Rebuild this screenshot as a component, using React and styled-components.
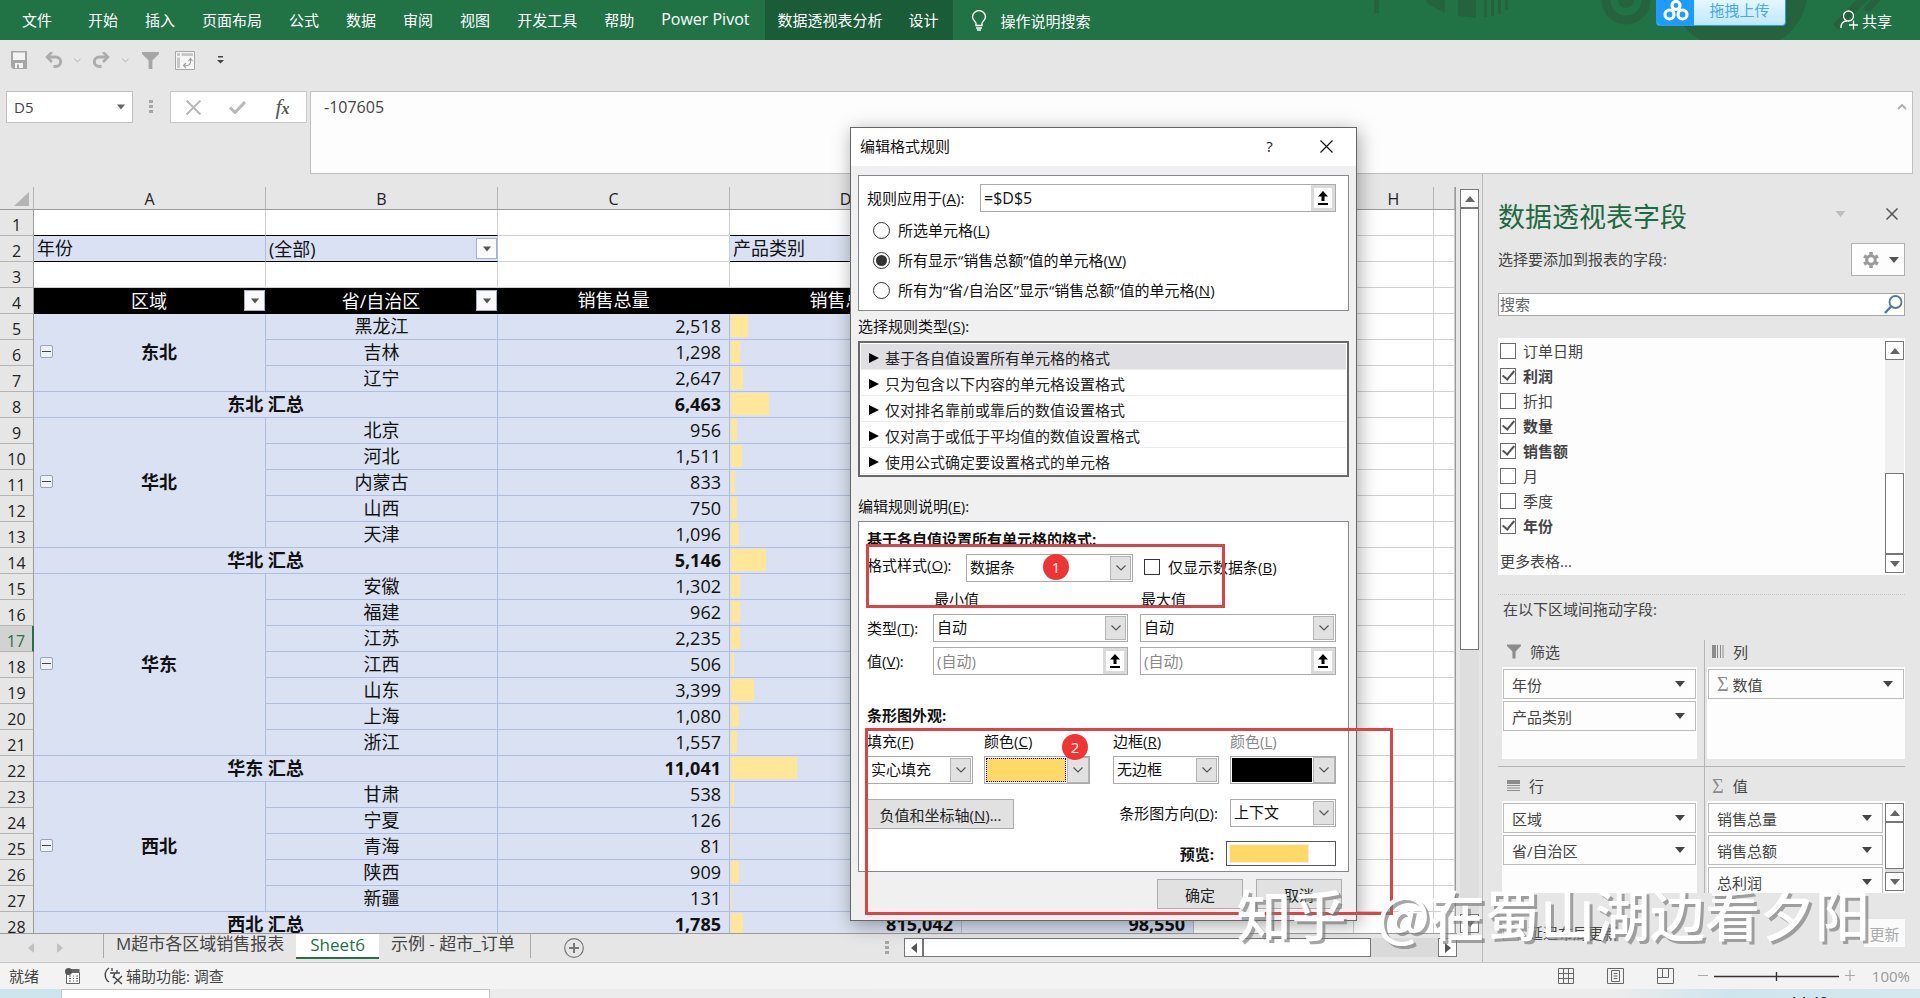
import React, { useState } from 'react'
import styled, { createGlobalStyle, css } from 'styled-components'

const tabs = ['开始', '插入', '页面布局', '公式', '数据', '审阅', '视图', '开发工具', '帮助']

// [区域, 行数据], 每行: [省份, 数量, 数据条宽度]
const regions = [
  {
    name: '东北',
    rows: [['黑龙江', '2,518', 17], ['吉林', '1,298', 9], ['辽宁', '2,647', 12]],
    total: ['6,463', 38]
  },
  {
    name: '华北',
    rows: [['北京', '956', 6], ['河北', '1,511', 11], ['内蒙古', '833', 4], ['山西', '750', 6], ['天津', '1,096', 8]],
    total: ['5,146', 35]
  },
  {
    name: '华东',
    rows: [
      ['安徽', '1,302', 9],
      ['福建', '962', 9],
      ['江苏', '2,235', 9],
      ['江西', '506', 3],
      ['山东', '3,399', 23],
      ['上海', '1,080', 8],
      ['浙江', '1,557', 6]
    ],
    total: ['11,041', 66]
  },
  {
    name: '西北',
    rows: [['甘肃', '538', 3], ['宁夏', '126', 1], ['青海', '81', 1], ['陕西', '909', 8], ['新疆', '131', 1]],
    total: ['1,785', 12, '815,042', '98,550']
  }
]

const ruleTypes = [
  '基于各自值设置所有单元格的格式',
  '只为包含以下内容的单元格设置格式',
  '仅对排名靠前或靠后的数值设置格式',
  '仅对高于或低于平均值的数值设置格式',
  '使用公式确定要设置格式的单元格'
]

const fields = [
  ['订单日期', false],
  ['利润', true],
  ['折扣', false],
  ['数量', true],
  ['销售额', true],
  ['月', false],
  ['季度', false],
  ['年份', true]
]

const Key = ({ text, k, end = '' }) => (
  <>
    {text}(<u>{k}</u>){end}
  </>
)

const Caret = ({ up, size = 10, color = '#444' }) => (
  <svg width={size} height='6' viewBox='0 0 10 6' aria-hidden='true'>
    <path d={up ? 'M0 6L5 0L10 6Z' : 'M0 0H10L5 6Z'} fill={color} />
  </svg>
)

const Chevron = ({ color = '#555', size = 10 }) => (
  <svg width={size} height={size} viewBox='0 0 10 10' fill='none' aria-hidden='true'>
    <path d='M0.5 2.5L5 7L9.5 2.5' stroke={color} strokeWidth='1.2' />
  </svg>
)

const Cross = ({ size = 13, color = '#111', width = 1.2 }) => (
  <svg width={size} height={size} viewBox='0 0 13 13' aria-hidden='true'>
    <path d='M0.5 0.5L12.5 12.5M12.5 0.5L0.5 12.5' stroke={color} strokeWidth={width} />
  </svg>
)

const RefArrow = () => (
  <svg width='12' height='14' viewBox='0 0 12 14' aria-hidden='true'>
    <path d='M6 0L11 5.5H7.5V10H4.5V5.5H1ZM1 12H11V14H1Z' fill='#000' />
  </svg>
)

const Funnel = ({ width = 14, height = 15, color = '#8c8c8c' }) => (
  <svg width={width} height={height} viewBox='0 0 18 18' aria-hidden='true'>
    <path d='M0 0H18V2L11 9V18H7V9L0 2Z' fill={color} />
  </svg>
)

const UndoIcon = ({ flip }) => (
  <svg width='18' height='16' viewBox='0 0 18 16' fill='none' aria-hidden='true'>
    <g transform={flip ? 'translate(18 0) scale(-1 1)' : undefined}>
      <path d='M2 5H10.500A5 4.600 0 0 1 10.500 14.500H8.500' stroke='#acacac' strokeWidth='3' />
      <path d='M7 0L2 5L7 10' stroke='#acacac' strokeWidth='2.600' />
    </g>
  </svg>
)

const Combo = ({ id, value, width, height = 28, label }) => (
  <SelectBox $width={width} $height={height}>
    <select id={id} defaultValue={value} aria-label={label}>
      <option>{value}</option>
    </select>
    <SelectArrow>
      <Chevron />
    </SelectArrow>
  </SelectBox>
)

const RefInput = ({ id, value, placeholder, label }) => (
  <RefBox>
    <input id={id} defaultValue={value} placeholder={placeholder} aria-label={label} />
    <RefButton aria-label='折叠对话框'>
      <RefArrow />
    </RefButton>
  </RefBox>
)

const Ribbon = () => (
  <RibbonBar>
    <Pattern viewBox='0 0 560 40' aria-hidden='true'>
      <g fill='#25633f'>
        <path d='M14 0H19V13H14ZM66 0H85V13L68 4ZM98 0H116V18L98 16ZM124 0H127V17H124ZM131 0H134V16H131ZM138 0H141V14H138ZM145 0H148V10H145Z' />
        <path d='M310 -10A62 60 0 0 0 340 40H420A62 60 0 0 0 448 -10Z' />
        <path d='M473 24L500 -4H512L478 30ZM503 9L514 -4H524L509 13Z' />
      </g>
      <circle cx='266' cy='0' r='20' fill='none' stroke='#25633f' strokeWidth='9' />
      <circle cx='266' cy='0' r='8' fill='#25633f' />
    </Pattern>
    <Tab $first>文件</Tab>
    {tabs.map(tab => (
      <Tab key={tab}>{tab}</Tab>
    ))}
    <Tab $latin>Power Pivot</Tab>
    <ContextTabs>
      <Tab $tight>数据透视表分析</Tab>
      <Tab $tight>设计</Tab>
    </ContextTabs>
    <TellMe>
      <svg width='16' height='21' viewBox='0 0 16 21' fill='none' stroke='#fff' strokeWidth='1.4' aria-hidden='true'>
        <path d='M5 15.500V13.500C5 11.500 1.500 10 1.500 6.800A6.300 6 0 0 1 14.500 6.800C14.500 10 11 11.500 11 13.500V15.500ZM5 18H11M6 20H10' />
      </svg>
      操作说明搜索
    </TellMe>
    <Share>
      <svg width='18' height='20' viewBox='0 0 18 20' fill='none' stroke='#fff' strokeWidth='1.3' aria-hidden='true'>
        <circle cx='8.500' cy='6' r='5' />
        <path d='M1 18C1 13.500 3.500 11 7 11M13.500 10.500V19.500M9 15H18' />
      </svg>
      共享
    </Share>
    <Upload>
      <UploadLogo>
        <svg width='28' height='22' viewBox='0 0 28 22' fill='none' stroke='#fff' strokeWidth='3.200' aria-hidden='true'>
          <circle cx='14' cy='5.500' r='4' />
          <circle cx='7.500' cy='14.500' r='4.500' />
          <circle cx='20.500' cy='14.500' r='4.500' />
        </svg>
      </UploadLogo>
      <span>拖拽上传</span>
    </Upload>
  </RibbonBar>
)

const QuickAccess = () => (
  <QuickBar>
    <IconButton aria-label='保存' $width={34}>
      <svg width='16' height='18' viewBox='0 0 16 18' aria-hidden='true'>
        <path d='M0 0H16V18H2L0 16Z' fill='#a6a6a6' />
        <path d='M2 1.500H14V9H2ZM4 12H12V17H4Z' fill='#f3f3f3' />
        <path d='M6 13.500H8V17H6Z' fill='#a6a6a6' />
      </svg>
    </IconButton>
    <IconButton aria-label='撤消' $width={36}>
      <UndoIcon />
    </IconButton>
    <IconButton aria-label='撤消列表' $width={10}>
      <Chevron size={7} color='#a6a6a6' />
    </IconButton>
    <IconButton aria-label='恢复' $width={38}>
      <UndoIcon flip />
    </IconButton>
    <IconButton aria-label='恢复列表' $width={10}>
      <Chevron size={7} color='#a6a6a6' />
    </IconButton>
    <IconButton aria-label='筛选' $width={40}>
      <Funnel width={19} height={17} color='#a6a6a6' />
    </IconButton>
    <IconButton aria-label='数据透视表' $width={30}>
      <svg width='20' height='19' viewBox='0 0 20 19' aria-hidden='true'>
        <path d='M0.500 0.500H19.500V18.500H0.500Z' fill='#f6f6f6' stroke='#a6a6a6' />
        <path d='M2 2H5V5H2ZM6.500 2H18V5H6.500ZM2 6.500H5V17H2Z' fill='#c8c8c8' />
        <path d='M9 14.500H12Q15.500 14.500 15.500 10V8M13.500 10L15.500 7.500L17.500 10M11 12L8.500 14.500L11 17' fill='none' stroke='#a0a0a0' strokeWidth='1.200' />
      </svg>
    </IconButton>
    <IconButton aria-label='自定义快速访问工具栏' $width={40}>
      <svg width='7' height='8' viewBox='0 0 7 8' aria-hidden='true'>
        <path d='M1 0H6V1.500H1ZM0 4H7L3.500 7.500Z' fill='#444' />
      </svg>
    </IconButton>
  </QuickBar>
)

const FormulaBar = () => (
  <FormulaRow>
    <NameBox>
      <input defaultValue='D5' aria-label='名称框' />
      <Caret size={8} color='#666' />
    </NameBox>
    <Grip />
    <FxBox>
      <IconButton aria-label='取消' $width={44}>
        <Cross size={15} color='#b8b8b8' width={1.8} />
      </IconButton>
      <IconButton aria-label='输入' $width={44}>
        <svg width='17' height='13' viewBox='0 0 17 13' fill='none' aria-hidden='true'>
          <path d='M1 6.500L6 11.500L16 1' stroke='#b8b8b8' strokeWidth='3' />
        </svg>
      </IconButton>
      <IconButton aria-label='插入函数' $width={47}>
        <Fx>
          f<small>x</small>
        </Fx>
      </IconButton>
    </FxBox>
    <FormulaText>
      <textarea defaultValue='-107605' aria-label='编辑栏' />
      <svg width='10' height='6' viewBox='0 0 10 6' fill='none' aria-hidden='true'>
        <path d='M1 5L5 1L9 5' stroke='#b0b0b0' strokeWidth='2' />
      </svg>
    </FormulaText>
  </FormulaRow>
)

const FilterButton = ({ label }) => (
  <Filter aria-label={label}>
    <Caret size={8} color='#555' />
  </Filter>
)

const BlankCells = () => (
  <>
    <Cell />
    <Cell />
    <Cell />
    <Cell />
  </>
)

const Sheet = () => {
  let n = 4
  return (
    <SheetTable>
      <colgroup>
        <Col $width={34} />
        {['A', 'B', 'C', 'D', 'E'].map(c => (
          <Col key={c} $width={232} />
        ))}
        {['F', 'G', 'H'].map(c => (
          <Col key={c} $width={80} />
        ))}
        <col />
      </colgroup>
      <thead>
        <tr>
          <Corner>
            <svg width='15' height='14' viewBox='0 0 15 14' aria-hidden='true'>
              <path d='M15 0V14H0Z' fill='#b4b4b4' />
            </svg>
          </Corner>
          {['A', 'B', 'C', 'D', 'E', 'F', 'G', 'H', ''].map(c => (
            <ColHead key={c}>{c}</ColHead>
          ))}
        </tr>
      </thead>
      <tbody>
        <tr>
          <RowHead>1</RowHead>
          <Cell $edge />
          <Cell $edge />
          <Cell />
          <Cell $edge />
          <Cell $edge />
          <BlankCells />
        </tr>
        <tr>
          <RowHead>2</RowHead>
          <Cell $pivot $edge $align='left'>年份</Cell>
          <Cell $pivot $edge $align='left' $filter>
            <WithFilter>
              (全部)
              <FilterButton label='筛选年份' />
            </WithFilter>
          </Cell>
          <Cell />
          <Cell $pivot $edge $align='left'>产品类别</Cell>
          <Cell $pivot $edge />
          <BlankCells />
        </tr>
        <tr>
          <RowHead>3</RowHead>
          <Cell />
          <Cell />
          <Cell />
          <Cell />
          <Cell />
          <BlankCells />
        </tr>
        <tr>
          <RowHead>4</RowHead>
          <Cell $head $filter>
            <WithFilter>
              <span>区域</span>
              <FilterButton label='筛选区域' />
            </WithFilter>
          </Cell>
          <Cell $head $filter>
            <WithFilter>
              <span>省/自治区</span>
              <FilterButton label='筛选省/自治区' />
            </WithFilter>
          </Cell>
          <Cell $head>销售总量</Cell>
          <Cell $head>销售总额</Cell>
          <Cell $head />
          <BlankCells />
        </tr>
        {regions.map(({ name, rows, total }) => (
          <React.Fragment key={name}>
            {rows.map(([province, amount, bar], i) => {
              n += 1
              return (
                <tr key={province}>
                  <RowHead $active={n === 17}>{n}</RowHead>
                  {i === 0 && (
                    <Cell $pivot rowSpan={rows.length}>
                      <Region>
                        <Collapse aria-label={`折叠${name}`} />
                        <strong>{name}</strong>
                      </Region>
                    </Cell>
                  )}
                  <Cell $pivot>{province}</Cell>
                  <Cell $pivot $align='right'>{amount}</Cell>
                  <Cell $pivot>
                    <DataBar style={{ width: bar }} />
                  </Cell>
                  <Cell $pivot />
                  <BlankCells />
                </tr>
              )
            })}
            <tr>
              <RowHead>{(n += 1)}</RowHead>
              <Cell $pivot $bold colSpan={2}>{name} 汇总</Cell>
              <Cell $pivot $bold $align='right'>{total[0]}</Cell>
              <Cell $pivot $bold $align='right'>
                <BarCell>
                  <DataBar style={{ width: total[1] }} />
                  {total[2]}
                </BarCell>
              </Cell>
              <Cell $pivot $bold $align='right'>{total[3]}</Cell>
              <BlankCells />
            </tr>
          </React.Fragment>
        ))}
      </tbody>
    </SheetTable>
  )
}

const SheetTabs = () => (
  <TabStrip>
    <TabNav>
      <svg width='6' height='10' viewBox='0 0 6 10' aria-hidden='true'>
        <path d='M6 0V10L0 5Z' fill='#c0c0c0' />
      </svg>
      <svg width='6' height='10' viewBox='0 0 6 10' aria-hidden='true'>
        <path d='M0 0V10L6 5Z' fill='#c0c0c0' />
      </svg>
    </TabNav>
    <SheetTab $left>M超市各区域销售报表</SheetTab>
    <SheetTab $active>Sheet6</SheetTab>
    <SheetTab $right>示例 - 超市_订单</SheetTab>
    <AddSheet aria-label='新工作表'>
      <svg width='20' height='20' viewBox='0 0 20 20' fill='none' stroke='#777' aria-hidden='true'>
        <circle cx='10' cy='10' r='9.300' strokeWidth='1.200' />
        <path d='M10 5V15M5 10H15' strokeWidth='2' />
      </svg>
    </AddSheet>
    <HScroll>
      <Grip />
      <ScrollButton aria-label='向左滚动'>
        <svg width='6' height='10' viewBox='0 0 6 10' aria-hidden='true'>
          <path d='M6 0V10L0 5Z' fill='#555' />
        </svg>
      </ScrollButton>
      <HTrack>
        <HThumb />
      </HTrack>
      <ScrollButton aria-label='向右滚动'>
        <svg width='6' height='10' viewBox='0 0 6 10' aria-hidden='true'>
          <path d='M0 0V10L6 5Z' fill='#555' />
        </svg>
      </ScrollButton>
    </HScroll>
  </TabStrip>
)

const Scrollbar = ({ before = 0, thumb, after = 0 }) => (
  <VScroll>
    <ScrollButton aria-label='向上滚动'>
      <Caret up color='#666' />
    </ScrollButton>
    <Spacer $grow={before} />
    <VThumb $grow={thumb} />
    <Spacer $grow={after} />
    <ScrollButton aria-label='向下滚动'>
      <Caret color='#666' />
    </ScrollButton>
  </VScroll>
)

const ZoneItem = ({ children }) => (
  <Item>
    <span>{children}</span>
    <Caret size={10} />
  </Item>
)

const FieldPane = () => (
  <Pane>
    <PaneHead>
      <h2>数据透视表字段</h2>
      <IconButton aria-label='任务窗格选项' $width={20}>
        <Caret size={11} color='#bdbdbd' />
      </IconButton>
      <IconButton aria-label='关闭窗格' $width={20}>
        <Cross size={12} color='#555' width={1.6} />
      </IconButton>
    </PaneHead>
    <PaneSub>
      <span>选择要添加到报表的字段:</span>
      <Gear aria-label='工具'>
        <svg width='16' height='16' viewBox='0 0 18 18' fill='none' aria-hidden='true'>
          <circle cx='9' cy='9' r='4.800' stroke='#999' strokeWidth='3.400' />
          <path d='M9 0V3M9 15V18M1.200 4.500L3.800 6M14.200 12L16.800 13.500M1.200 13.500L3.800 12M14.200 6L16.800 4.500' stroke='#999' strokeWidth='4' />
        </svg>
        <Caret size={10} color='#555' />
      </Gear>
    </PaneSub>
    <Search>
      <input placeholder='搜索' aria-label='搜索' />
      <svg width='19' height='19' viewBox='0 0 19 19' fill='none' stroke='#4f77a8' strokeWidth='1.800' aria-hidden='true'>
        <circle cx='11.500' cy='7' r='6' />
        <path d='M7 11.500L1 18' strokeWidth='2.400' />
      </svg>
    </Search>
    <FieldBox>
      <FieldList>
        {fields.map(([name, on]) => (
          <FieldRow key={name} $bold={on}>
            <Check type='checkbox' defaultChecked={on} />
            {name}
          </FieldRow>
        ))}
        <MoreTables href='#tables'>更多表格...</MoreTables>
      </FieldList>
      <Scrollbar before={114} thumb={80} />
    </FieldBox>
    <ZoneTitle>在以下区域间拖动字段:</ZoneTitle>
    <Zones>
      <Zone>
        <h3>
          <Funnel />
          筛选
        </h3>
        <Drop>
          <Items>
            <ZoneItem>年份</ZoneItem>
            <ZoneItem>产品类别</ZoneItem>
          </Items>
        </Drop>
      </Zone>
      <Zone $right>
        <h3>
          <svg width='12' height='13' viewBox='0 0 12 13' aria-hidden='true'>
            <path d='M0 0H4V13H0ZM5 0H6V13H5ZM8 0H9V13H8ZM10.500 0H11.500V13H10.500Z' fill='#8c8c8c' />
          </svg>
          列
        </h3>
        <Drop>
          <Items>
            <ZoneItem>
              <Sigma>Σ</Sigma> 数值
            </ZoneItem>
          </Items>
        </Drop>
      </Zone>
      <Zone $lower>
        <h3>
          <svg width='13' height='11' viewBox='0 0 13 11' aria-hidden='true'>
            <path d='M0 0H13V4H0ZM0 5H13V6H0ZM0 7.500H13V8.500H0ZM0 10H13V11H0Z' fill='#8c8c8c' />
          </svg>
          行
        </h3>
        <Drop>
          <Items>
            <ZoneItem>区域</ZoneItem>
            <ZoneItem>省/自治区</ZoneItem>
          </Items>
        </Drop>
      </Zone>
      <Zone $right $lower>
        <h3>
          <Sigma>Σ</Sigma>值
        </h3>
        <Drop>
          <Items>
            <ZoneItem>销售总量</ZoneItem>
            <ZoneItem>销售总额</ZoneItem>
            <ZoneItem>总利润</ZoneItem>
          </Items>
          <DropScroll>
            <Scrollbar thumb={47} after={3} />
          </DropScroll>
        </Drop>
      </Zone>
    </Zones>
    <Defer>
      <label>
        <Check type='checkbox' $dim />
        延迟布局更新
      </label>
      <button disabled>更新</button>
    </Defer>
  </Pane>
)

const RuleDialog = () => {
  const [scope, setScope] = useState('W')
  const scopes = [
    ['L', '所选单元格'],
    ['W', '所有显示“销售总额”值的单元格'],
    ['N', '所有为“省/自治区”显示“销售总额”值的单元格']
  ]

  return (
    <Dialog role='dialog' aria-label='编辑格式规则'>
      <DialogTitle>
        <span>编辑格式规则</span>
        <IconButton aria-label='帮助' $width={57}>
          ?
        </IconButton>
        <IconButton aria-label='关闭' $width={57}>
          <Cross />
        </IconButton>
      </DialogTitle>
      <DialogBody>
        <Group>
          <ApplyRow>
            <label htmlFor='range'>
              <Key text='规则应用于' k='A' end=':' />
            </label>
            <RefInput id='range' value='=$D$5' />
          </ApplyRow>
          {scopes.map(([k, text]) => (
            <RadioRow key={k}>
              <Radio type='radio' name='scope' checked={scope === k} onChange={() => setScope(k)} />
              <span>
                <Key text={text} k={k} />
              </span>
            </RadioRow>
          ))}
        </Group>
        <SectionLabel>
          <Key text='选择规则类型' k='S' end=':' />
        </SectionLabel>
        <RuleList>
          {ruleTypes.map((rule, i) => (
            <Rule key={rule} $selected={i === 0}>
              <svg width='10' height='10' viewBox='0 0 10 10' aria-hidden='true'>
                <path d='M0 0L10 5L0 10Z' />
              </svg>
              {rule}
            </Rule>
          ))}
        </RuleList>
        <SectionLabel $spaced>
          <Key text='编辑规则说明' k='E' end=':' />
        </SectionLabel>
        <Details>
          <Heading>基于各自值设置所有单元格的格式:</Heading>
          <StyleRow>
            <label htmlFor='style'>
              <Key text='格式样式' k='O' end=':' />
            </label>
            <Combo id='style' value='数据条' width={167} />
            <OnlyBar>
              <Check type='checkbox' $dark />
              <span>
                <Key text='仅显示数据条' k='B' />
              </span>
            </OnlyBar>
          </StyleRow>
          <ValueGrid>
            <i />
            <span>最小值</span>
            <span>最大值</span>
            <label htmlFor='minType'>
              <Key text='类型' k='T' end=':' />
            </label>
            <Combo id='minType' value='自动' />
            <Combo value='自动' label='最大值类型' />
            <label htmlFor='minValue'>
              <Key text='值' k='V' end=':' />
            </label>
            <RefInput id='minValue' placeholder='(自动)' />
            <RefInput placeholder='(自动)' label='最大值' />
          </ValueGrid>
          <Heading $spaced>条形图外观:</Heading>
          <LookRow>
            <Pair>
              <Field>
                <label htmlFor='fill'>
                  <Key text='填充' k='F' />
                </label>
                <Combo id='fill' value='实心填充' width={106} />
              </Field>
              <Field>
                <label htmlFor='fillColor'>
                  <Key text='颜色' k='C' />
                </label>
                <ColorButton id='fillColor' $color='#ffd966' $focus>
                  <span />
                  <i>
                    <Chevron />
                  </i>
                </ColorButton>
              </Field>
            </Pair>
            <Pair>
              <Field>
                <label htmlFor='border'>
                  <Key text='边框' k='R' />
                </label>
                <Combo id='border' value='无边框' width={106} />
              </Field>
              <Field $dim>
                <label htmlFor='borderColor'>
                  <Key text='颜色' k='L' />
                </label>
                <ColorButton id='borderColor' $color='#000'>
                  <span />
                  <i>
                    <Chevron />
                  </i>
                </ColorButton>
              </Field>
            </Pair>
          </LookRow>
          <AxisRow>
            <PushButton $width={147}>
              <Key text='负值和坐标轴' k='N' end='...' />
            </PushButton>
            <Direction>
              <label htmlFor='direction'>
                <Key text='条形图方向' k='D' end=':' />
              </label>
              <Combo id='direction' value='上下文' width={106} />
            </Direction>
          </AxisRow>
          <PreviewRow>
            <strong>预览:</strong>
            <Preview>
              <span />
            </Preview>
          </PreviewRow>
        </Details>
        <Footer>
          <PushButton $width={86}>确定</PushButton>
          <PushButton $width={86}>取消</PushButton>
        </Footer>
      </DialogBody>
      <Callout $top={416} $left={15} $width={359} $height={64} />
      <Callout $top={600} $left={14} $width={528} $height={187} />
      <Step $top={426} $left={192}>1</Step>
      <Step $top={606} $left={211}>2</Step>
    </Dialog>
  )
}

const StatusBar = () => (
  <Status>
    <span>就绪</span>
    <svg width='15' height='16' viewBox='0 0 15 16' aria-hidden='true'>
      <path d='M1.500 4.500H14.500V15.500H1.500Z' fill='#fff' stroke='#666' />
      <path d='M6 1H14.500V5H6Z' fill='#666' />
      <circle cx='3.500' cy='3.500' r='3.500' fill='#555' />
      <path d='M4 8H6M8 8H9M11 8H13M4 10.500H6M8 10.500H9M11 10.500H13M4 13H6M8 13H9M11 13H13' stroke='#666' />
    </svg>
    <Access>
      <svg width='19' height='18' viewBox='0 0 19 18' fill='none' stroke='#444' strokeWidth='1.400' aria-hidden='true'>
        <path d='M5 1C0 4 0 12 5 15M8 1V4M6 6H16M11 6L9 11M13 3V6M9 9L18 17M18 9L10 17' />
      </svg>
      辅助功能: 调查
    </Access>
    <Views>
      <IconButton aria-label='普通' $width={16}>
        <svg width='16' height='16' viewBox='0 0 16 16' fill='none' stroke='#666' aria-hidden='true'>
          <path d='M0.500 0.500H15.500V15.500H0.500ZM5.500 0V16M10.500 0V16M0 5.500H16M0 10.500H16' />
        </svg>
      </IconButton>
      <IconButton aria-label='页面布局' $width={17}>
        <svg width='17' height='16' viewBox='0 0 17 16' fill='none' stroke='#666' aria-hidden='true'>
          <path d='M0.500 0.500H16.500V15.500H0.500ZM4.500 2.500H12.500V13.500H4.500ZM6.500 5.500H10.500M6.500 8H10.500M6.500 10.500H10.500' />
        </svg>
      </IconButton>
      <IconButton aria-label='分页预览' $width={17}>
        <svg width='17' height='16' viewBox='0 0 17 16' fill='none' stroke='#666' aria-hidden='true'>
          <path d='M0.500 0.500H16.500V15.500H0.500ZM5.500 0.500V9.500M11.500 0.500V9.500M0.500 9.500H11.500' />
        </svg>
      </IconButton>
    </Views>
    <Zoom>
      <svg width='157' height='12' viewBox='0 0 157 12' aria-hidden='true'>
        <path d='M0 5.500H10M147 5.500H157M152 0V11' stroke='#aaa' strokeWidth='1.200' />
        <path d='M16 6.500H141M78.500 2V11' stroke='#333' strokeWidth='1.400' />
      </svg>
      100%
    </Zoom>
  </Status>
)

const App = () => (
  <Window>
    <GlobalStyle />
    <Ribbon />
    <QuickAccess />
    <FormulaBar />
    <Main>
      <Book>
        <SheetArea>
          <SheetView>
            <Sheet />
          </SheetView>
          <SheetScroll>
            <Scrollbar thumb={442} after={266} />
          </SheetScroll>
        </SheetArea>
        <SheetTabs />
      </Book>
      <FieldPane />
    </Main>
    <StatusBar />
    <Taskbar>
      <TaskSearch />
      <Clock>14:40</Clock>
    </Taskbar>
    <RuleDialog />
    <Watermark>
      <span>知乎</span>
      <span>@在蜀山湖边看夕阳</span>
    </Watermark>
  </Window>
)

const GlobalStyle = createGlobalStyle`
  * {
    box-sizing: border-box;
  }
  body {
    margin: 0;
  }
  body, button, input, select, textarea {
    font-family: 'Open Sans', 'Noto Sans CJK SC', sans-serif;
    font-size: 15px;
    color: #222;
  }
  button {
    padding: 0;
    border: 0;
    background: none;
  }
  h2, h3 {
    margin: 0;
    font-weight: 400;
  }
  svg {
    flex: none;
    display: block;
  }
`
const center = css`
  display: flex;
  align-items: center;
  justify-content: center;
`
const Window = styled.div`
  position: relative;
  display: flex;
  flex-direction: column;
  height: 100vh;
  overflow: hidden;
  background: #e6e6e6;
  line-height: 20px;
`
const RibbonBar = styled.nav`
  position: relative;
  display: flex;
  flex: none;
  height: 40px;
  background: #217346;
`
const Pattern = styled.svg`
  position: absolute;
  top: 0;
  right: 0;
  width: 560px;
  height: 40px;
`
const Tab = styled.button`
  padding: ${p => (p.$first ? '0 22px 2px' : p.$tight ? '0 14px 2px 12px' : '0 13px 2px 14px')};
  font-size: ${p => (p.$latin ? 16 : 15)}px;
  color: #fff;
  white-space: nowrap;
`
const ContextTabs = styled.div`
  display: flex;
  margin-left: 3px;
  background: #1b5c38;
`
const TellMe = styled.button`
  ${center}
  gap: 14px;
  padding: 0 18px;
  color: #fff;
`
const Share = styled.button`
  ${center}
  position: relative;
  gap: 4px;
  margin-left: auto;
  margin-right: 28px;
  color: #fff;
`
const Upload = styled.div`
  position: absolute;
  top: 0;
  right: 134px;
  display: flex;
  width: 130px;
  height: 26px;
  overflow: hidden;
  border: 1px solid #2b9bf0;
  border-top: 0;
  border-radius: 0 0 4px 4px;
  background: linear-gradient(#e4f7ff, #c0e8fc);
  color: #4aa9e8;

  > span {
    flex: 1;
    text-align: center;
  }
`
const UploadLogo = styled.div`
  display: flex;
  justify-content: center;
  width: 37px;
  background: #1e9bff;
`
const QuickBar = styled.div`
  display: flex;
  flex: none;
  height: 51px;
  padding: 0 0 11px 2px;
`
const IconButton = styled.button`
  ${center}
  width: ${p => p.$width}px;
`
const FormulaRow = styled.div`
  display: flex;
  flex: none;
  align-items: flex-start;
  height: 83px;
  padding: 0 7px 0 6px;
`
const NameBox = styled.div`
  display: flex;
  align-items: center;
  width: 127px;
  height: 32px;
  padding: 0 7px;
  border: 1px solid #c0c0c0;
  background: #fff;

  input {
    flex: 1;
    min-width: 0;
    padding: 0;
    border: 0;
    color: #444;
  }
`
const Grip = styled.i`
  width: 4px;
  height: 14px;
  margin: 9px 17px 9px 16px;
  background: repeating-linear-gradient(#a6a6a6 0 3px, transparent 3px 5px);
`
const FxBox = styled.div`
  display: flex;
  width: 137px;
  height: 32px;
  margin-right: 3px;
  border: 1px solid #c8c8c8;
  background: #fff;
`
const Fx = styled.em`
  font-family: 'Liberation Serif', serif;
  font-size: 22px;
  color: #555;

  small {
    font-size: 16px;
    font-weight: 700;
  }
`
const FormulaText = styled.div`
  display: flex;
  flex: 1;
  height: 83px;
  padding: 4px 5px 4px 13px;
  border: 1px solid #c0c0c0;
  background: #fdfdfd;

  textarea {
    flex: 1;
    padding: 0;
    border: 0;
    resize: none;
    background: none;
    font-size: 16px;
    line-height: 22px;
    color: #444;
  }
  svg {
    margin-top: 8px;
  }
`
const Main = styled.main`
  display: flex;
  flex: 1;
  min-height: 0;
`
const Book = styled.section`
  display: flex;
  flex: 1;
  flex-direction: column;
  min-width: 0;
`
const SheetArea = styled.div`
  display: flex;
  flex: 1;
  min-height: 0;
  padding-top: 13px;
`
const SheetView = styled.div`
  flex: 1;
  min-width: 0;
  overflow: hidden;
  border-right: 1px solid #999;
`
const SheetScroll = styled.div`
  display: flex;
  padding: 2px 3px 0 4px;
`
const SheetTable = styled.table`
  width: 100%;
  table-layout: fixed;
  border-spacing: 0;
  background: #fff;
`
const Col = styled.col`
  width: ${p => p.$width}px;
`
const ColHead = styled.th`
  height: 23px;
  padding: 2px 0 0;
  border-right: 1px solid #b4b4b4;
  border-bottom: 1px solid #9b9b9b;
  background: #e6e6e6;
  font-size: 16px;
  font-weight: 400;
  line-height: 20px;
`
const Corner = styled(ColHead)`
  svg {
    margin: 0 4px 0 auto;
  }
`
const RowHead = styled.th`
  height: 26px;
  padding: 5px 0 0;
  border-right: 1px solid #9b9b9b;
  border-bottom: 1px solid #b4b4b4;
  background: #e6e6e6;
  font-size: 16px;
  font-weight: 400;
  line-height: 20px;
  ${p =>
    p.$active &&
    css`
      border-right: 2px solid #217346;
      background: #d2d2d2;
      color: #217346;
    `}
`
const Cell = styled.td`
  height: 26px;
  padding: 0 ${p => (p.$align === 'right' ? 8 : 0)}px ${p => (p.$filter ? 0 : 2)}px ${p => (p.$align === 'left' ? 3 : 0)}px;
  overflow: hidden;
  border-right: 1px solid #d0d0d0;
  border-bottom: 1px solid #d0d0d0;
  font-size: 18px;
  font-weight: ${p => (p.$bold ? 700 : 400)};
  line-height: 22px;
  text-align: ${p => p.$align || 'center'};
  white-space: nowrap;
  color: #111;
  ${p =>
    p.$pivot &&
    css`
      border-color: #aebde0;
      background: #d9e1f2;
    `}
  ${p =>
    p.$head &&
    css`
      border-color: #000;
      background: #000;
      color: #fff;
    `}
  ${p =>
    p.$edge &&
    css`
      border-bottom-color: #000;
    `}
`
const WithFilter = styled.div`
  display: flex;
  align-items: center;
  justify-content: space-between;

  > span {
    flex: 1;
    margin-right: -20px;
  }
`
const Filter = styled.button`
  ${center}
  position: relative;
  width: 21px;
  height: 21px;
  border: 1px solid #a6b0c4;
  background: #fafafa;
`
const Region = styled.div`
  display: flex;
  align-items: center;
  padding-left: 6px;

  strong {
    flex: 1;
  }
`
const Collapse = styled.button`
  ${center}
  width: 13px;
  height: 13px;
  border: 1px solid #97a3b8;
  border-radius: 2px;
  background: #eef1f8;

  &::after {
    content: '';
    width: 9px;
    height: 1px;
    background: #444;
  }
`
const DataBar = styled.div`
  height: 22px;
  margin-left: 1px;
  background: #ffe699;
`
const BarCell = styled.div`
  display: flex;
  align-items: center;
  justify-content: space-between;
`
const TabStrip = styled.div`
  display: flex;
  flex: none;
  height: 29px;
  margin-right: 25px;
  border-top: 1px solid #9b9b9b;
`
const TabNav = styled.div`
  display: flex;
  align-items: center;
  gap: 23px;
  width: 103px;
  padding-left: 28px;
`
const SheetTab = styled.button`
  height: 24px;
  padding: 0 12px 4px;
  font-size: 17px;
  line-height: 20px;
  white-space: nowrap;
  color: #444;
  ${p =>
    p.$left &&
    css`
      border-left: 1px solid #aaa;
    `}
  ${p =>
    p.$right &&
    css`
      padding-right: 15px;
      border-right: 1px solid #aaa;
    `}
  ${p =>
    p.$active &&
    css`
      height: 25px;
      padding: 0 14px 2px;
      border-bottom: 2px solid #217346;
      background: #fff;
      color: #217346;
    `}
`
const AddSheet = styled.button`
  ${center}
  width: 86px;
`
const HScroll = styled.div`
  display: flex;
  align-items: flex-start;
  flex: 0 1 572px;
  margin-left: auto;
  padding-top: 4px;

  ${Grip} {
    flex: none;
    margin: 3px 15px 0 0;
  }
`
const HTrack = styled.div`
  flex: 1;
  background: #dadada;
`
const HThumb = styled.div`
  width: 87%;
  height: 19px;
  border: 1px solid #777;
  background: #fff;
`
const ScrollButton = styled.button`
  ${center}
  flex: none;
  width: 19px;
  height: 19px;
  border: 1px solid #777;
  background: #fff;
`
const VScroll = styled.div`
  display: flex;
  flex-direction: column;
  width: 19px;
  background: #dedede;
`
const Spacer = styled.div`
  flex: ${p => p.$grow} 0 0;
`
const VThumb = styled.div`
  flex: ${p => p.$grow} 0 0;
  border: 1px solid #777;
  background: #fff;
`
const Pane = styled.aside`
  flex: none;
  width: 438px;
  padding: 23px 15px 0;
  border-left: 1px solid #bbb;
  color: #444;
`
const PaneHead = styled.div`
  display: flex;
  height: 40px;
  padding-right: 3px;

  h2 {
    margin-right: auto;
    font-size: 27px;
    line-height: 40px;
    color: #1d6a41;
  }
  button {
    height: 34px;
    margin-left: 32px;
  }
`
const PaneSub = styled.div`
  display: flex;
  align-items: center;
  justify-content: space-between;
  margin: 6px 0 17px;

  > span {
    padding-bottom: 2px;
  }
`
const Gear = styled.button`
  ${center}
  gap: 10px;
  width: 54px;
  height: 33px;
  padding-left: 6px;
  border: 1px solid #b0b0b0;
  background: #fdfdfd;
`
const Search = styled.div`
  display: flex;
  align-items: center;
  height: 23px;
  padding: 0 1px;
  border: 1px solid #a6a6a6;
  background: #fff;

  input {
    flex: 1;
    padding: 0 0 2px;
    border: 0;
    background: none;

    &::placeholder {
      color: #666;
    }
  }
`
const FieldBox = styled.div`
  display: flex;
  height: 237px;
  margin: 22px 0 19px;
  padding-right: 1px;
  background: #fdfdfd;

  ${VScroll} {
    margin: 3px 0 2px;
    background: #f0f0f0;
  }
`
const FieldList = styled.div`
  flex: 1;
  padding-left: 2px;
`
const FieldRow = styled.label`
  display: flex;
  align-items: center;
  gap: 7px;
  height: 25px;
  font-weight: ${p => (p.$bold ? 700 : 400)};
`
const Check = styled.input`
  appearance: none;
  ${center}
  flex: none;
  width: 16px;
  height: 16px;
  margin: 0;
  border: 1px solid ${p => (p.$dark ? '#333' : '#6a6a6a')};
  background: #fff;
  opacity: ${p => (p.$dim ? 0.4 : 1)};

  &:checked::after {
    content: '';
    width: 5px;
    height: 10px;
    margin-top: -3px;
    border: solid #555;
    border-width: 0 2px 2px 0;
    transform: rotate(40deg);
  }
`
const MoreTables = styled.a`
  display: block;
  margin-top: 13px;
  color: #444;
  text-decoration: none;
`
const ZoneTitle = styled.div`
  padding: 4px 5px 21px;
  border-top: 1px dotted #c4c4c4;
`
const Zones = styled.div`
  display: grid;
  grid-template-columns: 206px 1fr;
`
const Zone = styled.section`
  padding: 0 7px 7px 4px;
  ${p =>
    p.$right &&
    css`
      padding: 0 0 7px 2px;
      border-left: 1px solid #b4b4b4;
    `}
  ${p =>
    p.$lower &&
    css`
      padding-top: 7px;
      padding-bottom: 0;
      border-top: 1px solid #b4b4b4;
    `}

  h3 {
    display: flex;
    align-items: center;
    gap: 9px;
    height: 27px;
    padding: 0 5px 4px;
    font-size: 15px;
  }
`
const Sigma = styled.span`
  font-family: 'Liberation Serif', serif;
  font-size: 20px;
  line-height: 20px;
  color: #8c8c8c;
`
const Drop = styled.div`
  display: flex;
  height: 92px;
  overflow: hidden;
  padding: 2px 1px;
  background: #fdfdfd;
`
const Items = styled.div`
  display: flex;
  flex: 1;
  flex-direction: column;
  gap: 2px;
`
const Item = styled.button`
  display: flex;
  flex: none;
  align-items: center;
  justify-content: space-between;
  height: 30px;
  padding: 0 10px 0 8px;
  border: 1px solid #bcbcbc;
  background: #fdfdfd;
  color: #444;
`
const DropScroll = styled.div`
  display: flex;
  margin-left: 2px;
`
const Defer = styled.div`
  display: flex;
  align-items: center;
  justify-content: space-between;
  margin-top: 26px;
  padding-left: 5px;

  label {
    display: flex;
    align-items: center;
    gap: 9px;
  }
  button {
    width: 41px;
    height: 28px;
    background: #fafafa;
    color: #aaa;
  }
`
const Dialog = styled.section`
  position: absolute;
  top: 127px;
  left: 850px;
  width: 507px;
  border: 1px solid #666;
  background: #f0f0f0;
  box-shadow: 2px 4px 18px rgba(0, 0, 0, 0.35);
  color: #111;
`
const DialogTitle = styled.header`
  display: flex;
  height: 38px;
  padding: 0 1px 2px 9px;
  background: #fff;
  line-height: 36px;

  span {
    margin-right: auto;
  }
`
const DialogBody = styled.div`
  padding: 9px 7px 11px;
`
const Group = styled.div`
  padding: 8px 12px 5px 8px;
  border: 1px solid #828790;
  background: #fff;
`
const ApplyRow = styled.div`
  display: grid;
  grid-template-columns: 113px 1fr;
  align-items: center;
  margin-bottom: 3px;
`
const RefBox = styled.div`
  display: flex;
  min-width: 0;
  height: 28px;
  border: 1px solid #aaa;
  background: #fff;

  input {
    flex: 1;
    min-width: 0;
    padding: 0 3px;
    border: 0;
    font-size: 16px;
    color: #111;

    &::placeholder {
      font-size: 15px;
      color: #888;
    }
  }
`
const RefButton = styled.button`
  ${center}
  width: 24px;
  border: 3px solid #dadada;
  background: #fff;
`
const RadioRow = styled.label`
  display: flex;
  align-items: center;
  gap: 8px;
  height: 30px;
  padding-left: 6px;
`
const Radio = styled.input`
  appearance: none;
  ${center}
  width: 17px;
  height: 17px;
  margin: 0;
  border: 1px solid #333;
  border-radius: 50%;

  &:checked::after {
    content: '';
    width: 11px;
    height: 11px;
    border-radius: 50%;
    background: #333;
  }
`
const SectionLabel = styled.div`
  margin-top: ${p => (p.$spaced ? 14 : 0)}px;
  line-height: 30px;
`
const RuleList = styled.div`
  padding: 1px;
  border: 2px solid #696969;
  background: #fff;
`
const Rule = styled.button`
  display: flex;
  align-items: center;
  gap: 6px;
  width: 100%;
  height: 26px;
  padding: 2px 0 0 8px;
  border-bottom: 1px solid #ececec;
  background: ${p => (p.$selected ? '#dedee3' : '#fff')};
`
const Details = styled(Group)`
  padding: 7px 12px 5px 8px;
`
const Heading = styled.div`
  margin-top: ${p => (p.$spaced ? 30 : 0)}px;
  font-weight: 700;
`
const StyleRow = styled.div`
  display: flex;
  align-items: center;
  margin-top: 5px;

  > label:first-child {
    width: 99px;
    padding-bottom: 7px;
  }
`
const SelectBox = styled.div`
  display: grid;
  width: ${p => (p.$width ? `${p.$width}px` : 'auto')};
  height: ${p => p.$height}px;

  select {
    grid-area: 1 / 1;
    appearance: none;
    width: 100%;
    padding: 0 3px 2px;
    border: 1px solid #aaa;
    border-radius: 0;
    background: #fff;
    color: #111;
  }
`
const SelectArrow = styled.span`
  ${center}
  grid-area: 1 / 1;
  justify-self: end;
  width: 21px;
  margin: 2px;
  border: 1px solid #b4b4b4;
  background: #e1e1e1;
  pointer-events: none;
`
const OnlyBar = styled.label`
  display: flex;
  align-items: center;
  gap: 8px;
  margin-left: 11px;
  padding-bottom: 2px;
`
const ValueGrid = styled.div`
  display: grid;
  grid-template-columns: 54px 195px minmax(0, 1fr);
  gap: 5px 12px;
  align-items: center;
  margin-top: 7px;

  > span {
    padding-left: 1px;
  }
`
const LookRow = styled.div`
  display: flex;
  justify-content: space-between;
  margin: 6px 0 15px;
`
const Pair = styled.div`
  display: flex;
  gap: 11px;
`
const Field = styled.div`
  display: flex;
  flex-direction: column;
  gap: 5px;
  color: ${p => (p.$dim ? '#888' : '#111')};
`
const ColorButton = styled.button`
  display: flex;
  width: 106px;
  height: 28px;
  border: 1px solid #aaa;
  background: #fff;

  span {
    flex: 1;
    align-self: stretch;
    margin: 1px;
    border: ${p => (p.$focus ? '1px dotted #000' : '0')};
    background: ${p => p.$color};
  }
  i {
    ${center}
    align-self: stretch;
    width: 22px;
    border: 1px solid #b4b4b4;
    background: #e1e1e1;
  }
`
const AxisRow = styled.div`
  display: flex;
  align-items: flex-start;
  justify-content: space-between;
  height: 31px;
`
const PushButton = styled.button`
  width: ${p => p.$width}px;
  height: 30px;
  border: 1px solid #adadad;
  background: #e1e1e1;
`
const Direction = styled.div`
  display: flex;
  align-items: center;
  gap: 12px;
`
const PreviewRow = styled.div`
  display: flex;
  align-items: center;
  justify-content: flex-end;
  gap: 12px;
  margin-top: 11px;
`
const Preview = styled.div`
  width: 110px;
  height: 25px;
  padding: 2px;
  border: 1px solid #555;

  span {
    display: block;
    width: 80px;
    height: 19px;
    border: 1px solid #eee;
    background: #ffd966;
  }
`
const Footer = styled.footer`
  display: flex;
  justify-content: flex-end;
  gap: 13px;
  padding: 7px 7px 0 0;
`
const Callout = styled.div`
  position: absolute;
  top: ${p => p.$top}px;
  left: ${p => p.$left}px;
  width: ${p => p.$width}px;
  height: ${p => p.$height}px;
  border: 3px solid #d94545;
  pointer-events: none;
`
const Step = styled.div`
  ${center}
  position: absolute;
  top: ${p => p.$top}px;
  left: ${p => p.$left}px;
  width: 26px;
  height: 26px;
  border-radius: 50%;
  background: #f03434;
  color: #fff;
`
const Status = styled.footer`
  display: flex;
  flex: none;
  align-items: center;
  height: 27px;
  padding: 0 10px 0 9px;
  border-top: 1px solid #c8c8c8;
  background: #f3f3f3;
  color: #444;

  > svg {
    margin: 0 24px 0 26px;
  }
`
const Access = styled.div`
  display: flex;
  align-items: center;
  gap: 3px;
`
const Views = styled.div`
  display: flex;
  gap: 33px;
  margin: 0 24px 0 auto;
`
const Zoom = styled.div`
  display: flex;
  align-items: center;
  gap: 17px;
  color: #999;
`
const Taskbar = styled.div`
  display: flex;
  flex: none;
  height: 9px;
  overflow: hidden;
  padding-left: 61px;
  background: linear-gradient(90deg, #cfe5ee 61px, #ebebeb 61px, #ececec 84%, #cfe5ee 90%, #d5e8ef);
`
const TaskSearch = styled.div`
  width: 429px;
  border: 1px solid #c4c4c4;
  border-bottom: 0;
  background: #fff;
`
const Clock = styled.span`
  margin: 2px 92px 0 auto;
  line-height: 20px;
`
const Watermark = styled.div`
  position: absolute;
  right: 50px;
  bottom: 56px;
  display: flex;
  gap: 30px;
  font-family: 'Noto Sans CJK SC', sans-serif;
  font-size: 55px;
  font-weight: 500;
  line-height: 60px;
  color: #fff;
  text-shadow: 3px 3px 0 rgba(120, 120, 120, 0.65);
  pointer-events: none;
`

export default App
